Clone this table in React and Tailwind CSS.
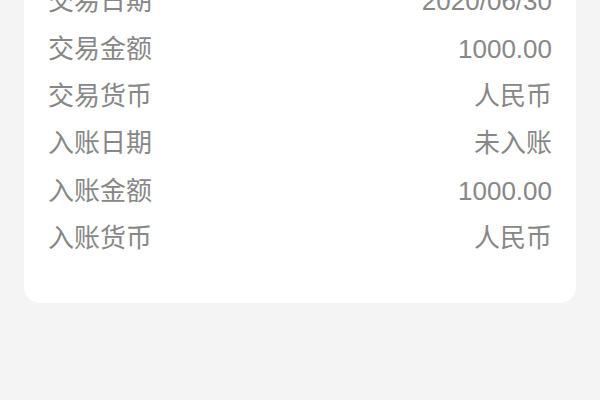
import React from 'react';

const rows = [
  ['交易日期', '2020/06/30'],
  ['交易金额', '1000.00'],
  ['交易货币', '人民币'],
  ['入账日期', '未入账'],
  ['入账金额', '1000.00'],
  ['入账货币', '人民币'],
];

export default function App() {
  return (
    <div className="h-screen w-screen overflow-hidden bg-[#f4f4f4]" style={{ fontFamily: '"Liberation Sans", "Noto Sans CJK SC", sans-serif' }}>
      <div className="mx-6 -mt-[22px] rounded-b-2xl bg-white pb-[41px]">
        {rows.map(([label, value]) => (
          <div key={label} className="flex h-[47.4px] items-center justify-between px-6 text-[26px] text-[#878787]">
            <span>{label}</span>
            <span>{value}</span>
          </div>
        ))}
      </div>
    </div>
  );
}
